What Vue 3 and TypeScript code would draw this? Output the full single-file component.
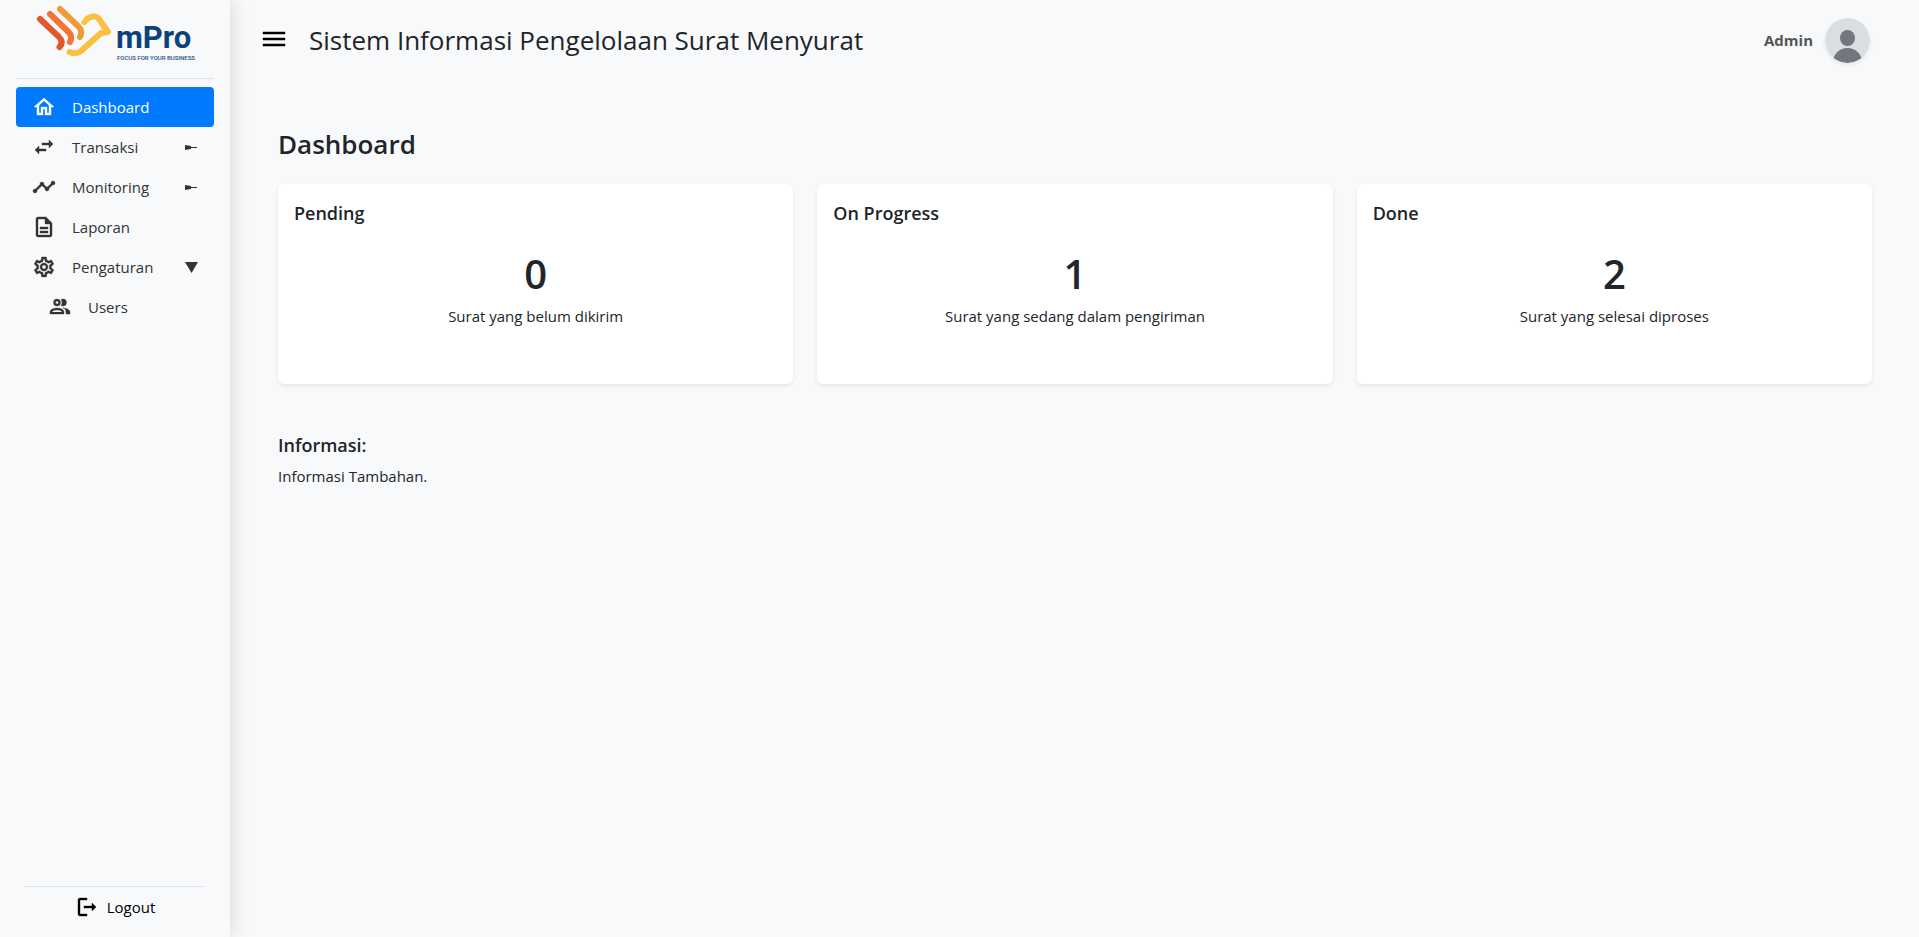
<script setup lang="ts">
import { ref } from 'vue'

interface NavItem {
  label: string
  icon: string
  active?: boolean
  child?: boolean
  arrow?: 'closed' | 'open'
}

interface StatusCard {
  title: string
  count: number
  note: string
}

const navItems: NavItem[] = [
  {
    label: 'Dashboard',
    active: true,
    icon: 'M12 5.69l5 4.5V18h-2v-6H9v6H7v-7.81l5-4.5M12 3L2 12h3v8h6v-6h2v6h6v-8h3L12 3z',
  },
  {
    label: 'Transaksi',
    arrow: 'closed',
    icon: 'M6.99 11L3 15l3.99 4v-3H14v-2H6.99v-3zM21 9l-3.99-4v3H10v2h7.01v3L21 9z',
  },
  {
    label: 'Monitoring',
    arrow: 'closed',
    icon: 'M23 8c0 1.1-.9 2-2 2-.18 0-.35-.02-.51-.07l-3.56 3.55c.05.16.07.34.07.52 0 1.1-.9 2-2 2s-2-.9-2-2c0-.18.02-.36.07-.52l-2.55-2.55c-.16.05-.34.07-.52.07s-.36-.02-.52-.07l-4.55 4.56c.05.16.07.33.07.51 0 1.1-.9 2-2 2s-2-.9-2-2 .9-2 2-2c.18 0 .35.02.51.07l4.56-4.55C8.02 9.36 8 9.18 8 9c0-1.1.9-2 2-2s2 .9 2 2c0 .18-.02.36-.07.52l2.55 2.55c.16-.05.34-.07.52-.07s.36.02.52.07l3.55-3.56C19.02 8.35 19 8.18 19 8c0-1.1.9-2 2-2s2 .9 2 2z',
  },
  {
    label: 'Laporan',
    icon: 'M8 16h8v2H8zm0-4h8v2H8zm6-10H6c-1.1 0-2 .9-2 2v16c0 1.1.89 2 1.99 2H18c1.1 0 2-.9 2-2V8l-6-6zm4 18H6V4h7v5h5v11z',
  },
  {
    label: 'Pengaturan',
    arrow: 'open',
    icon: 'M19.43 12.98c.04-.32.07-.64.07-.98 0-.34-.03-.66-.07-.98l2.11-1.65c.19-.15.24-.42.12-.64l-2-3.46c-.09-.16-.26-.25-.44-.25-.06 0-.12.01-.17.03l-2.49 1c-.52-.4-1.08-.73-1.69-.98l-.38-2.65C14.46 2.18 14.25 2 14 2h-4c-.25 0-.46.18-.49.42l-.38 2.65c-.61.25-1.17.59-1.69.98l-2.49-1c-.06-.02-.12-.03-.18-.03-.17 0-.34.09-.43.25l-2 3.46c-.13.22-.07.49.12.64l2.11 1.65c-.04.32-.07.65-.07.98 0 .33.03.66.07.98l-2.11 1.65c-.19.15-.24.42-.12.64l2 3.46c.09.16.26.25.44.25.06 0 .12-.01.17-.03l2.49-1c.52.4 1.08.73 1.69.98l.38 2.65c.03.24.24.42.49.42h4c.25 0 .46-.18.49-.42l.38-2.65c.61-.25 1.17-.59 1.69-.98l2.49 1c.06.02.12.03.18.03.17 0 .34-.09.43-.25l2-3.46c.12-.22.07-.49-.12-.64l-2.11-1.65zm-1.98-1.71c.04.31.05.52.05.73 0 .21-.02.43-.05.73l-.14 1.13.89.7 1.08.84-.7 1.21-1.27-.51-1.04-.42-.9.68c-.43.32-.84.56-1.25.73l-1.06.43-.16 1.13-.2 1.35h-1.4l-.19-1.35-.16-1.13-1.06-.43c-.43-.18-.83-.41-1.23-.71l-.91-.7-1.06.43-1.27.51-.7-1.21 1.08-.84.89-.7-.14-1.13c-.03-.31-.05-.54-.05-.74s.02-.43.05-.73l.14-1.13-.89-.7-1.08-.84.7-1.21 1.27.51 1.04.42.9-.68c.43-.32.84-.56 1.25-.73l1.06-.43.16-1.13.2-1.35h1.39l.19 1.35.16 1.13 1.06.43c.43.18.83.41 1.23.71l.91.7 1.06-.43 1.27-.51.7 1.21-1.07.85-.89.7.14 1.13zM12 8c-2.21 0-4 1.79-4 4s1.79 4 4 4 4-1.79 4-4-1.79-4-4-4zm0 6c-1.1 0-2-.9-2-2s.9-2 2-2 2 .9 2 2-.9 2-2 2z',
  },
  {
    label: 'Users',
    child: true,
    icon: 'M13.07 10.41A5 5 0 0 0 13.07 4.59A3.39 3.39 0 0 1 15 4A3.5 3.5 0 0 1 15 11A3.39 3.39 0 0 1 13.07 10.41M5.5 7.5A3.5 3.5 0 1 1 9 11A3.5 3.5 0 0 1 5.5 7.5M7.5 7.5A1.5 1.5 0 1 0 9 6A1.5 1.5 0 0 0 7.5 7.5M16 17V19H2V17S2 13 9 13 16 17 16 17M14 17C13.86 16.22 12.67 15 9 15S4.07 16.31 4 17M15.95 13A5.32 5.32 0 0 1 18 17V19H22V17S22 13.37 14.94 13Z',
  },
]

const cards: StatusCard[] = [
  { title: 'Pending', count: 0, note: 'Surat yang belum dikirim' },
  { title: 'On Progress', count: 1, note: 'Surat yang sedang dalam pengiriman' },
  { title: 'Done', count: 2, note: 'Surat yang selesai diproses' },
]

const sidebarOpen = ref(true)
</script>

<template>
  <div class="layout">
    <aside v-show="sidebarOpen" class="sidebar">
      <div class="brand">
        <svg class="logo" viewBox="0 0 160 62" role="img" aria-label="mPro">
          <g fill="none" stroke-width="6" stroke-linecap="round" stroke-linejoin="round">
            <path stroke="#e2572b" d="M5 19L24 37Q29 42 24.500 47" />
            <path stroke="#f37433" d="M15 14L33.500 32Q38 36.500 35 42" />
            <path stroke="#f19a38" d="M25 9L43.500 26.500Q48 31 45 37" />
            <path stroke="#fbbf42" d="M49.500 22Q53 16.500 59 16.500Q62 16.500 64 19L73 32L66 33L46 51Q41 55 34.500 52" />
          </g>
          <text class="logo-name" x="81" y="48">mPro</text>
          <text class="logo-tag" x="82" y="60">FOCUS FOR YOUR BUSINESS</text>
        </svg>
      </div>

      <nav class="nav" aria-label="Menu">
        <a
          v-for="item in navItems"
          :key="item.label"
          href="#"
          class="nav-link"
          :class="{ active: item.active, child: item.child }"
        >
          <svg class="icon" viewBox="0 0 24 24" aria-hidden="true"><path :d="item.icon" /></svg>
          <span class="nav-label">{{ item.label }}</span>
          <svg v-if="item.arrow" class="arrow" viewBox="0 0 13 11" aria-hidden="true">
            <path v-if="item.arrow === 'open'" d="M0 0H13L6.500 11Z" />
            <path v-else d="M0 3L6 4V5H12V6H6V7L0 8Z" />
          </svg>
        </a>
      </nav>

      <div class="sidebar-foot">
        <a href="#" class="logout">
          <svg class="icon" viewBox="0 0 24 24" aria-hidden="true">
            <path d="M5 5h7V3H5c-1.100 0-2 .9-2 2v14c0 1.100.9 2 2 2h7v-2H5V5zm16 7-4-4v3H9v2h8v3l4-4z" />
          </svg>
          <span>Logout</span>
        </a>
      </div>
    </aside>

    <div class="main">
      <header class="topbar">
        <button class="toggle" type="button" aria-label="Menu" @click="sidebarOpen = !sidebarOpen">
          <svg viewBox="0 0 22 16" aria-hidden="true">
            <path d="M0 0H22V2H0ZM0 6H22V8H0ZM0 12H22V14H0Z" />
          </svg>
        </button>
        <div class="app-title">Sistem Informasi Pengelolaan Surat Menyurat</div>
        <div class="user">
          <span class="user-name">Admin</span>
          <svg class="avatar" viewBox="0 0 45 45" aria-hidden="true">
            <defs>
              <clipPath id="avatar-clip"><circle cx="22.500" cy="22.500" r="22.500" /></clipPath>
            </defs>
            <g clip-path="url(#avatar-clip)">
              <rect width="45" height="45" fill="#dadde1" />
              <ellipse cx="22.500" cy="20" rx="7.500" ry="8" fill="#72777d" />
              <path fill="#72777d" d="M7 45C9 35 15 30 22.500 30S36 35 38 45Z" />
            </g>
          </svg>
        </div>
      </header>

      <main class="content">
        <h1 class="page-title">Dashboard</h1>
        <section class="cards">
          <article v-for="card in cards" :key="card.title" class="card">
            <h2 class="heading">{{ card.title }}</h2>
            <div class="count">{{ card.count }}</div>
            <p class="note">{{ card.note }}</p>
          </article>
        </section>
        <section class="info">
          <h2 class="heading">Informasi:</h2>
          <p class="text">Informasi Tambahan.</p>
        </section>
      </main>
    </div>
  </div>
</template>

<style>
body {
  margin: 0;
  background: #f8f9fb;
}
</style>

<style scoped>
.layout {
  display: flex;
  min-height: 100vh;
  background: #f8f9fb;
  color: #212529;
  font-family: "Segoe UI", "Open Sans", "Noto Sans", sans-serif;
  font-size: 15px;
  line-height: 24px;
}

.layout * {
  box-sizing: border-box;
}

h1,
h2,
p {
  margin: 0;
}

a {
  color: inherit;
  text-decoration: none;
}

.sidebar {
  display: flex;
  flex-direction: column;
  flex: none;
  width: 230px;
  padding: 0 16px;
  box-shadow: 0 0 20px rgba(0, 0, 0, 0.15);
}

.brand {
  height: 79px;
  border-bottom: 1px solid #dee2e6;
  padding-left: 19px;
}

.logo {
  display: block;
  width: 160px;
  height: 62px;
}

.logo-name {
  fill: #0c427c;
  font-family: "Roboto", sans-serif;
  font-size: 31px;
  font-weight: 700;
}

.logo-tag {
  fill: #1d527f;
  font-family: "Roboto", sans-serif;
  font-size: 6px;
  font-weight: 500;
}

.nav {
  display: flex;
  flex-direction: column;
  flex: 1;
  padding-top: 8px;
}

.nav-link {
  display: flex;
  align-items: center;
  height: 40px;
  padding: 0 16px;
  gap: 16px;
  border-radius: 4px;
  color: #333;
}

.nav-link.active {
  background: #007bff;
  color: #fff;
}

.nav-link.child {
  padding-left: 32px;
}

.nav-label {
  flex: 1;
}

.icon {
  flex: none;
  width: 24px;
  height: 24px;
  fill: currentColor;
  stroke: currentColor;
  stroke-width: 0.4;
}

.arrow {
  flex: none;
  width: 13px;
  height: 11px;
  fill: currentColor;
}

.sidebar-foot {
  margin: 0 9px;
  padding: 8px 0 18px;
  border-top: 1px solid #dee2e6;
}

.logout {
  display: flex;
  align-items: center;
  justify-content: center;
  gap: 8px;
  color: #000;
}

.main {
  flex: 1;
  min-width: 0;
}

.topbar {
  display: flex;
  align-items: center;
  height: 80px;
  padding: 0 49px 0 33px;
}

.toggle {
  padding: 0;
  border: 0;
  background: none;
  cursor: pointer;
}

.toggle svg {
  display: block;
  width: 22px;
  height: 16px;
  stroke: #000;
  stroke-width: 0.5;
  overflow: visible;
}

.app-title {
  flex: 1;
  margin-left: 24px;
  font-size: 26px;
  line-height: 32px;
}

.user {
  display: flex;
  align-items: center;
  gap: 12px;
}

.user-name {
  color: #555;
  font-weight: 700;
}

.avatar {
  width: 45px;
  height: 45px;
  border-radius: 50%;
  box-shadow: 0 2px 4px rgba(0, 0, 0, 0.08);
}

.content {
  padding: 48px 47px 48px 48px;
}

.page-title {
  font-size: 26px;
  font-weight: 600;
  line-height: 32px;
}

.cards {
  display: grid;
  grid-template-columns: repeat(3, 1fr);
  gap: 24px;
  margin-top: 24px;
}

.card {
  min-height: 200px;
  padding: 16px;
  border-radius: 6px;
  background: #fff;
  box-shadow: 0 2px 4px rgba(0, 0, 0, 0.08);
}

.heading {
  font-size: 18px;
  font-weight: 600;
  line-height: 26px;
}

.count {
  margin-top: 24px;
  font-size: 40px;
  font-weight: 600;
  line-height: 48px;
  text-align: center;
}

.note {
  margin-top: 6px;
  text-align: center;
}

.info {
  margin-top: 48px;
}

.text {
  margin-top: 6px;
}
</style>
